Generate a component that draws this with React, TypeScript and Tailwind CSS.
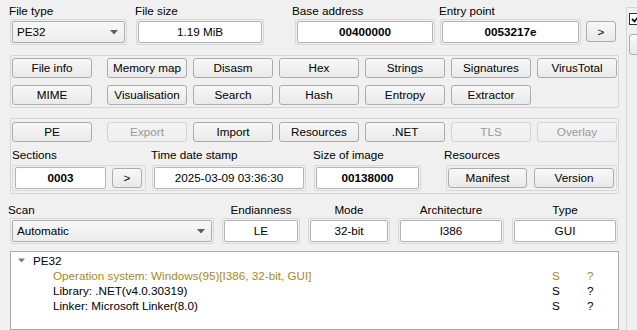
import React from "react";

const FONT = "font-['Liberation_Sans',Arial,sans-serif]";

function Btn({ label, w = "w-[80px]", off = false, cls = "" }: { label: string; w?: string; off?: boolean; cls?: string }) {
  return (
    <div
      className={`${w} h-[20px] shrink-0 flex items-center justify-center rounded-[3px] border bg-linear-to-b ${
        off ? "border-[#d3d3d3] from-[#f4f4f4] to-[#eeeeee] text-[#9a9a9a]" : "border-[#acacac] from-[#f8f8f8] to-[#e9e9e9] text-black"
      } ${cls}`}
    >
      {label}
    </div>
  );
}

function Edit({ value, bold = false, cls = "" }: { value: string; bold?: boolean; cls?: string }) {
  return (
    <div
      className={`h-[22px] flex-1 flex items-center justify-center rounded-[2px] border border-[#b4b4b4] bg-white ${bold ? "font-bold" : ""} ${cls}`}
    >
      {value}
    </div>
  );
}

function Combo({ value }: { value: string }) {
  return (
    <div className="h-[22px] flex-1 flex items-center justify-between rounded-[2px] border border-[#acacac] bg-linear-to-b from-[#f8f8f8] to-[#ececec] pl-[4px] pr-[6px]">
      <span>{value}</span>
      <svg width="8" height="5" viewBox="0 0 8 5">
        <path d="M0 0h8L4 4.5z" fill="#5f5f5f" />
      </svg>
    </div>
  );
}

function Frame({ children, cls = "" }: { children: React.ReactNode; cls?: string }) {
  return <div className={`h-[26px] flex items-center gap-[6px] border border-[#d9d9d9] rounded-[2px] p-[1px] ${cls}`}>{children}</div>;
}

function Field({
  label,
  w,
  ml,
  children,
  center = false,
  lx = "-ml-[1px]",
  gap = "mt-[1px]",
}: {
  label: string;
  w: string;
  ml: string;
  children: React.ReactNode;
  center?: boolean;
  lx?: string;
  gap?: string;
}) {
  return (
    <div className={`flex flex-col ${w} ${ml} shrink-0`}>
      <div className={`h-[14px] leading-[14px] whitespace-nowrap ${center ? "text-center" : lx}`}>{label}</div>
      <Frame cls={gap}>{children}</Frame>
    </div>
  );
}

const row1 = ["File info", "Memory map", "Disasm", "Hex", "Strings", "Signatures", "VirusTotal"];
const row2 = ["MIME", "Visualisation", "Search", "Hash", "Entropy", "Extractor"];
const row3: [string, boolean][] = [
  ["PE", false],
  ["Export", true],
  ["Import", false],
  ["Resources", false],
  [".NET", false],
  ["TLS", true],
  ["Overlay", true],
];

function ButtonRow({ items }: { items: [string, boolean][] }) {
  return (
    <div className="flex">
      {items.map(([t, off], i) => (
        <Btn key={t} label={t} off={off} cls={i === 0 ? "" : i === 1 ? "ml-[15px]" : "ml-[6px]"} />
      ))}
    </div>
  );
}

const results = [
  { text: "Operation system: Windows(95)[I386, 32-bit, GUI]", color: "text-[#a8891a]" },
  { text: "Library: .NET(v4.0.30319)", color: "text-black" },
  { text: "Linker: Microsoft Linker(8.0)", color: "text-black" },
];

export default function App() {
  return (
    <div className={`w-[637px] h-[330px] overflow-hidden bg-[#f0f0f0] text-[11.7px] text-black flex ${FONT}`}>
      <div className="w-[626px] shrink-0 flex flex-col pt-[4px]">
        {/* top row */}
        <div className="flex items-end">
          <Field label="File type" w="w-[117px]" ml="ml-[10px]">
            <Combo value="PE32" />
          </Field>
          <Field label="File size" w="w-[128px]" ml="ml-[9px]">
            <Edit value="1.19 MiB" />
          </Field>
          <Field label="Base address" w="w-[140px]" ml="ml-[31px]" lx="-ml-[3px]">
            <Edit value="00400000" bold />
          </Field>
          <Field label="Entry point" w="w-[141px]" ml="ml-[5px]">
            <Edit value="0053217e" bold />
          </Field>
          <div className="ml-[5px] mb-[3px] w-[30px] h-[21px] flex items-center justify-center rounded-[3px] border border-[#acacac] bg-linear-to-b from-[#f8f8f8] to-[#e9e9e9]">
            &gt;
          </div>
        </div>

        {/* tools */}
        <div className="ml-[10px] mt-[10px] w-[609px] border border-[#d6d6d6] rounded-[2px] pl-[1px] pt-[2px] pb-[2px] flex flex-col gap-[7px]">
          <ButtonRow items={row1.map((t) => [t, false])} />
          <ButtonRow items={row2.map((t) => [t, false])} />
        </div>

        {/* PE group */}
        <div className="ml-[10px] mt-[10px] w-[609px] border border-[#d6d6d6] rounded-[2px] pl-[1px] pt-[3px] pb-[2px] flex flex-col">
          <ButtonRow items={row3} />
          <div className="flex mt-[6px]">
            <Field label="Sections" w="w-[134px]" ml="ml-[0px]" lx="ml-0" gap="mt-[3px]">
              <Edit value="0003" bold cls="ml-[1px] max-w-[91px]" />
              <div className="w-[30px] h-[20px] flex items-center justify-center rounded-[3px] border border-[#acacac] bg-linear-to-b from-[#f8f8f8] to-[#e9e9e9]">
                &gt;
              </div>
            </Field>
            <Field label="Time date stamp" w="w-[154px]" ml="ml-[6px]" gap="mt-[3px]">
              <Edit value="2025-03-09 03:36:30" />
            </Field>
            <Field label="Size of image" w="w-[107px]" ml="ml-[8px]" gap="mt-[3px]">
              <Edit value="00138000" bold />
            </Field>
            <Field label="Resources" w="w-[171px]" ml="ml-[25px]" lx="-ml-[2px]" gap="mt-[3px]">
              <Btn label="Manifest" w="w-[79px]" />
              <Btn label="Version" w="w-[80px]" cls="ml-[1px]" />
            </Field>
          </div>
        </div>

        {/* scan row */}
        <div className="flex mt-[9px]">
          <Field label="Scan" w="w-[204px]" ml="ml-[10px]" lx="-ml-[2px]">
            <Combo value="Automatic" />
          </Field>
          <Field label="Endianness" w="w-[78px]" ml="ml-[8px]" center>
            <Edit value="LE" />
          </Field>
          <Field label="Mode" w="w-[82px]" ml="ml-[8px]" center>
            <Edit value="32-bit" />
          </Field>
          <Field label="Architecture" w="w-[106px]" ml="ml-[8px]" center>
            <Edit value="I386" />
          </Field>
          <Field label="Type" w="w-[106px]" ml="ml-[8px]" center>
            <Edit value="GUI" />
          </Field>
        </div>

        {/* result tree */}
        <div className="ml-[10px] mt-[7px] w-[609px] flex-1 border border-[#acacac] bg-white pt-[1px] leading-[15px]">
          <div className="flex items-center h-[15px]">
            <svg className="ml-[7px]" width="7" height="5" viewBox="0 0 7 5">
              <path d="M0 0.5h7L3.5 4.5z" fill="#7a7a7a" />
            </svg>
            <span className="ml-[8px]">PE32</span>
          </div>
          {results.map((r) => (
            <div key={r.text} className={`flex h-[15px] ${r.color}`}>
              <span className="ml-[42px] w-[499px] whitespace-nowrap">{r.text}</span>
              <span className="w-[35px]">S</span>
              <span>?</span>
            </div>
          ))}
        </div>
      </div>

      {/* right strip */}
      <div className="flex-1 mt-[7px] border-l border-t border-[#d6d6d6] flex flex-col pl-[2px] pt-[5px]">
        <div className="w-[12px] h-[12px] border border-[#333] bg-white flex items-center justify-center">
          <svg width="9" height="8" viewBox="0 0 9 8">
            <path d="M1 4l2.5 2.5L8 1" stroke="#111" strokeWidth="1.8" fill="none" />
          </svg>
        </div>
        <div className="mt-[9px] w-[20px] h-[21px] rounded-[3px] border border-[#acacac] bg-linear-to-b from-[#f8f8f8] to-[#e9e9e9]" />
      </div>
    </div>
  );
}
